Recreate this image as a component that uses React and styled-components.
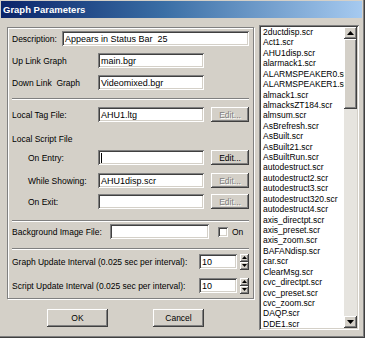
import React from "react";
import styled, { createGlobalStyle } from "styled-components";

const FONT = `"Liberation Sans", Arial, sans-serif`;

const Global = createGlobalStyle`
  html, body { margin: 0; padding: 0; background: #d4d0c8; }
  body { font-family: ${FONT}; }
  * { box-sizing: border-box; }
`;

const sunken = `box-shadow: inset 1px 1px #808080, inset -1px -1px #ffffff, inset 2px 2px #404040, inset -2px -2px #d4d0c8;`;
const raised = `box-shadow: inset -1px -1px #404040, inset 1px 1px #ffffff, inset -2px -2px #808080, inset 2px 2px #d4d0c8;`;

const Window = styled.div`
  width: 365px;
  height: 338px;
  background: #d4d0c8;
  padding: 1px 3px 2px 1px;
  display: flex;
  flex-direction: column;
  box-shadow: inset -1px -1px #404040, inset -2px -2px #808080;
  font-family: ${FONT};
  font-size: 8.5px;
  color: #000;
`;

const TitleBar = styled.div`
  height: 17px;
  flex: none;
  display: flex;
  align-items: center;
  padding-left: 2px;
  background: linear-gradient(90deg, #0a246a 0%, #3a6ea5 45%, #a6caf0 100%);
  color: #fff;
  font-weight: bold;
  font-size: 9.5px;
`;

const Body = styled.div`
  flex: 1;
  display: flex;
  padding: 7px 0 0 6px;
`;

const LeftCol = styled.div`
  width: 247px;
  margin-top: 2px;
  display: flex;
  flex-direction: column;
`;

const Group = styled.div`
  height: 272px;
  border: 1px solid #808080;
  box-shadow: inset 1px 1px #ffffff, 1px 1px #ffffff;
  padding: 3px 4px 0 4px;
  display: flex;
  flex-direction: column;
`;

const Row = styled.div`
  display: flex;
  align-items: center;
  height: ${(p) => p.$h || 15}px;
  margin-top: ${(p) => p.$mt || 0}px;
`;

const Label = styled.span`
  width: ${(p) => p.$w}px;
  padding-left: ${(p) => p.$indent || 0}px;
  flex: none;
  white-space: pre;
`;

const Field = styled.div`
  width: ${(p) => p.$w}px;
  height: 15px;
  flex: none;
  background: #fff;
  ${sunken}
  padding: 0 3px;
  display: flex;
  align-items: center;
  white-space: pre;
  font-size: 9px;
`;

const Caret = styled.span`
  width: 1px;
  height: 10px;
  background: #000;
`;

const Button = styled.div`
  width: ${(p) => p.$w}px;
  height: ${(p) => p.$h || 15}px;
  margin-left: ${(p) => p.$ml || 0}px;
  flex: none;
  display: flex;
  align-items: center;
  justify-content: center;
  background: #d4d0c8;
  ${raised}
  color: ${(p) => (p.$disabled ? "#808080" : "#000")};
  text-shadow: ${(p) => (p.$disabled ? "1px 1px #ffffff" : "none")};
`;

const Separator = styled.div`
  height: 2px;
  margin-top: ${(p) => p.$mt || 0}px;
  border-top: 1px solid #808080;
  border-bottom: 1px solid #ffffff;
`;

const Check = styled.div`
  width: 10px;
  height: 10px;
  margin-left: ${(p) => p.$ml || 0}px;
  flex: none;
  background: #fff;
  ${sunken}
`;

const CheckLabel = styled.span`
  margin-left: 4px;
`;

const Spinner = styled.div`
  margin-left: 3px;
  display: flex;
  flex-direction: column;
  width: 10px;
  height: 16px;
`;

const SpinButton = styled.div`
  flex: 1;
  display: flex;
  align-items: center;
  justify-content: center;
  background: #d4d0c8;
  ${raised}
`;

const ButtonRow = styled.div`
  display: flex;
  margin-top: 10px;
`;

const ListBox = styled.div`
  width: 100px;
  height: 305px;
  margin-left: 5px;
  background: #fff;
  ${sunken}
  padding: 2px;
  display: flex;
`;

const Items = styled.div`
  flex: 1;
  overflow: hidden;
  padding-left: 2px;
`;

const Item = styled.div`
  height: 10.43px;
  line-height: 10.43px;
  white-space: nowrap;
`;

const ScrollBar = styled.div`
  width: 13px;
  display: flex;
  flex-direction: column;
  background: #e6e4df;
`;

const ScrollArrow = styled.div`
  height: 12px;
  flex: none;
  display: flex;
  align-items: center;
  justify-content: center;
  background: #d4d0c8;
  ${raised}
`;

const Thumb = styled.div`
  height: 70px;
  flex: none;
  background: #d4d0c8;
  ${raised}
`;

const Track = styled.div`
  flex: 1;
`;

const Arrow = ({ down, w = 7 }) => {
  const h = Math.ceil(w / 2);
  return (
    <svg width={w} height={h} viewBox={`0 0 ${w} ${h}`}>
      <polygon
        points={down ? `0,0 ${w},0 ${w / 2},${h}` : `0,${h} ${w},${h} ${w / 2},0`}
        fill="#000"
      />
    </svg>
  );
};

const files = [
  "2ductdisp.scr",
  "Act1.scr",
  "AHU1disp.scr",
  "alarmack1.scr",
  "ALARMSPEAKER0.scr",
  "ALARMSPEAKER1.scr",
  "almack1.scr",
  "almacksZT184.scr",
  "almsum.scr",
  "AsBrefresh.scr",
  "AsBuilt.scr",
  "AsBuilt21.scr",
  "AsBuiltRun.scr",
  "autodestruct.scr",
  "autodestruct2.scr",
  "autodestruct3.scr",
  "autodestruct320.scr",
  "autodestruct4.scr",
  "axis_directpt.scr",
  "axis_preset.scr",
  "axis_zoom.scr",
  "BAFANdisp.scr",
  "car.scr",
  "ClearMsg.scr",
  "cvc_directpt.scr",
  "cvc_preset.scr",
  "cvc_zoom.scr",
  "DAQP.scr",
  "DDE1.scr",
  "DDE2.scr",
];

const IntervalRow = ({ label, value, mt }) => (
  <Row $mt={mt}>
    <Label $w={187}>{label}</Label>
    <Field $w={38}>{value}</Field>
    <Spinner>
      <SpinButton>
        <Arrow w={5} />
      </SpinButton>
      <SpinButton>
        <Arrow w={5} down />
      </SpinButton>
    </Spinner>
  </Row>
);

export default function App() {
  return (
    <>
      <Global />
      <Window>
        <TitleBar>Graph Parameters</TitleBar>
        <Body>
          <LeftCol>
            <Group>
              <Row>
                <Label $w={50}>Description:</Label>
                <Field $w={187}>Appears in Status Bar  25</Field>
              </Row>
              <Row $mt={7}>
                <Label $w={86}>Up Link Graph</Label>
                <Field $w={106}>main.bgr</Field>
              </Row>
              <Row $mt={7}>
                <Label $w={86}>Down Link  Graph</Label>
                <Field $w={106}>Videomixed.bgr</Field>
              </Row>
              <Separator $mt={8} />
              <Row $mt={7}>
                <Label $w={86}>Local Tag File:</Label>
                <Field $w={106}>AHU1.ltg</Field>
                <Button $w={38} $ml={7} $disabled>Edit...</Button>
              </Row>
              <Row $mt={11} $h={12}>
                <Label $w={120}>Local Script File</Label>
              </Row>
              <Row $mt={5}>
                <Label $w={86} $indent={16}>On Entry:</Label>
                <Field $w={106}>
                  <Caret />
                </Field>
                <Button $w={38} $ml={7}>Edit...</Button>
              </Row>
              <Row $mt={8}>
                <Label $w={86} $indent={16}>While Showing:</Label>
                <Field $w={106}>AHU1disp.scr</Field>
                <Button $w={38} $ml={7} $disabled>Edit...</Button>
              </Row>
              <Row $mt={6}>
                <Label $w={86} $indent={16}>On Exit:</Label>
                <Field $w={106} />
                <Button $w={38} $ml={7} $disabled>Edit...</Button>
              </Row>
              <Separator $mt={11} />
              <Row $mt={2}>
                <Label $w={98}>Background Image File:</Label>
                <Field $w={99} />
                <Check $ml={9} />
                <CheckLabel>On</CheckLabel>
              </Row>
              <Separator $mt={9} />
              <IntervalRow mt={4} label="Graph Update Interval (0.025 sec per interval):" value="10" />
              <IntervalRow mt={9} label="Script Update Interval (0.025 sec per interval):" value="10" />
            </Group>
            <ButtonRow>
              <Button $w={61} $h={18} $ml={40}>OK</Button>
              <Button $w={51} $h={18} $ml={45}>Cancel</Button>
            </ButtonRow>
          </LeftCol>
          <ListBox>
            <Items>
              {files.map((f) => (
                <Item key={f}>{f}</Item>
              ))}
            </Items>
            <ScrollBar>
              <ScrollArrow>
                <Arrow w={7} />
              </ScrollArrow>
              <Thumb />
              <Track />
              <ScrollArrow>
                <Arrow w={7} down />
              </ScrollArrow>
            </ScrollBar>
          </ListBox>
        </Body>
      </Window>
    </>
  );
}
